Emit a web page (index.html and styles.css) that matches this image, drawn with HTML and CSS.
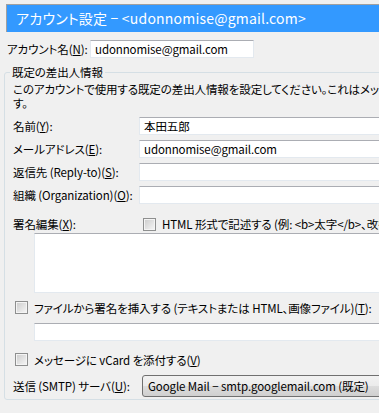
FILE: index.html
```html
<!DOCTYPE html>
<html lang="ja">
<head>
  <meta charset="UTF-8" />
  <title>アカウント設定</title>
  <link rel="stylesheet" href="styles.css">
</head>
<body>
  <div class="page">
    <div class="title-bar">アカウント設定 − &lt;udonnomise@gmail.com&gt;</div>

    <div class="account-row">
      <label class="account-label">アカウント名(<u>N</u>):</label>
      <div class="text-box account-name">udonnomise@gmail.com</div>
    </div>

    <fieldset class="group">
      <legend>既定の差出人情報</legend>
      <div class="desc">
        <div class="desc-line">このアカウントで使用する既定の差出人情報を設定してください。これはメッセージの送信者として相手に表示されま</div>
        <div class="desc-line">す。</div>
      </div>

      <div class="fields">
        <label>名前(<u>Y</u>):</label>
        <div class="text-box">本田五郎</div>

        <label>メールアドレス(<u>E</u>):</label>
        <div class="text-box">udonnomise@gmail.com</div>

        <label>返信先 (Reply-to)(<u>S</u>):</label>
        <div class="text-box"></div>

        <label>組織 (Organization)(<u>O</u>):</label>
        <div class="text-box"></div>
      </div>

      <div class="sig-row">
        <label class="sig-label">署名編集(<u>X</u>):</label>
        <span class="check"></span>
        <span class="check-text">HTML 形式で記述する (例: &lt;b&gt;太字&lt;/b&gt;、改行は &lt;br&gt;)</span>
      </div>
      <div class="text-box sig-area"></div>

      <div class="check-row">
        <span class="check"></span>
        <span class="check-text">ファイルから署名を挿入する (テキストまたは HTML、画像ファイル)(<u>T</u>):</span>
      </div>
      <div class="text-box file-box"></div>

      <div class="check-row vcard">
        <span class="check"></span>
        <span class="check-text">メッセージに vCard を添付する(<u>V</u>)</span>
      </div>

      <div class="smtp-row">
        <label class="smtp-label">送信 (SMTP) サーバ(<u>U</u>):</label>
        <div class="select">Google Mail − smtp.googlemail.com (既定)</div>
      </div>
    </fieldset>
  </div>
</body>
</html>
```

FILE: styles.css
```css
body {
  margin: 0;
  background: #f0f0f0;
  font-family: "Noto Sans CJK JP", sans-serif;
  font-size: 11.5px;
  line-height: 14px;
  font-feature-settings: "palt";
  letter-spacing: -0.1px;
  color: #000;
  overflow: hidden;
}

.page {
  width: 560px;
  padding-top: 4px;
}

u {
  text-underline-offset: 1px;
}

label {
  white-space: nowrap;
}

.title-bar {
  margin-left: 6px;
  height: 27px;
  line-height: 27px;
  border-top: 1px solid #a0a0a0;
  border-left: 1px solid #a0a0a0;
  background: #3399ff;
  color: #fff;
  font-size: 14px;
  letter-spacing: 0.2px;
  padding-left: 9px;
  white-space: nowrap;
}

.text-box {
  height: 18px;
  line-height: 16px;
  box-sizing: border-box;
  background: #fff;
  border: 1px solid #e3e9ef;
  border-top-color: #abadb3;
  padding-left: 4px;
  white-space: nowrap;
  overflow: hidden;
}

.account-row {
  display: flex;
  align-items: center;
  margin-top: 8px;
  padding-left: 7px;
}

.account-label {
  width: 83px;
}

.account-name {
  width: 164px;
}

.group {
  margin: 7px 0 0 4px;
  padding: 0 0 2px 8px;
  border: 1px solid #d5dfe5;
  border-radius: 3px;
  min-width: 0;
}

.group legend {
  padding: 0 2px;
  margin-left: -3px;
  line-height: 14px;
}

.desc {
  margin-top: 3px;
}

.desc-line {
  white-space: nowrap;
}

.fields {
  display: grid;
  grid-template-columns: 126px 1fr;
  row-gap: 5px;
  align-items: center;
  margin-top: 7px;
}

.sig-row {
  display: flex;
  align-items: center;
  margin-top: 13px;
  height: 14px;
}

.sig-label {
  width: 130px;
}

.check {
  flex: none;
  width: 11px;
  height: 11px;
  border: 1px solid #8e8f8f;
  background: linear-gradient(135deg, #cbcbcb, #f7f7f7);
  box-shadow: inset 0 0 0 1px #f4f4f4;
  margin-right: 6px;
}

.check-text {
  white-space: nowrap;
}

.sig-area {
  margin: 2px 0 0 21px;
  height: 60px;
}

.check-row {
  display: flex;
  align-items: center;
  margin: 8px 0 0 2px;
  height: 13px;
}

.file-box {
  margin: 9px 0 0 21px;
}

.vcard {
  margin-top: 12px;
}

.smtp-row {
  display: flex;
  align-items: center;
  margin-top: 9px;
}

.smtp-label {
  width: 129px;
}

.select {
  flex: 1;
  height: 22px;
  line-height: 20px;
  box-sizing: border-box;
  border: 1px solid #707070;
  border-radius: 3px;
  background: linear-gradient(#f2f2f2 0%, #ebebeb 50%, #dddddd 51%, #cfcfcf 100%);
  padding-left: 5px;
  white-space: nowrap;
}
```
